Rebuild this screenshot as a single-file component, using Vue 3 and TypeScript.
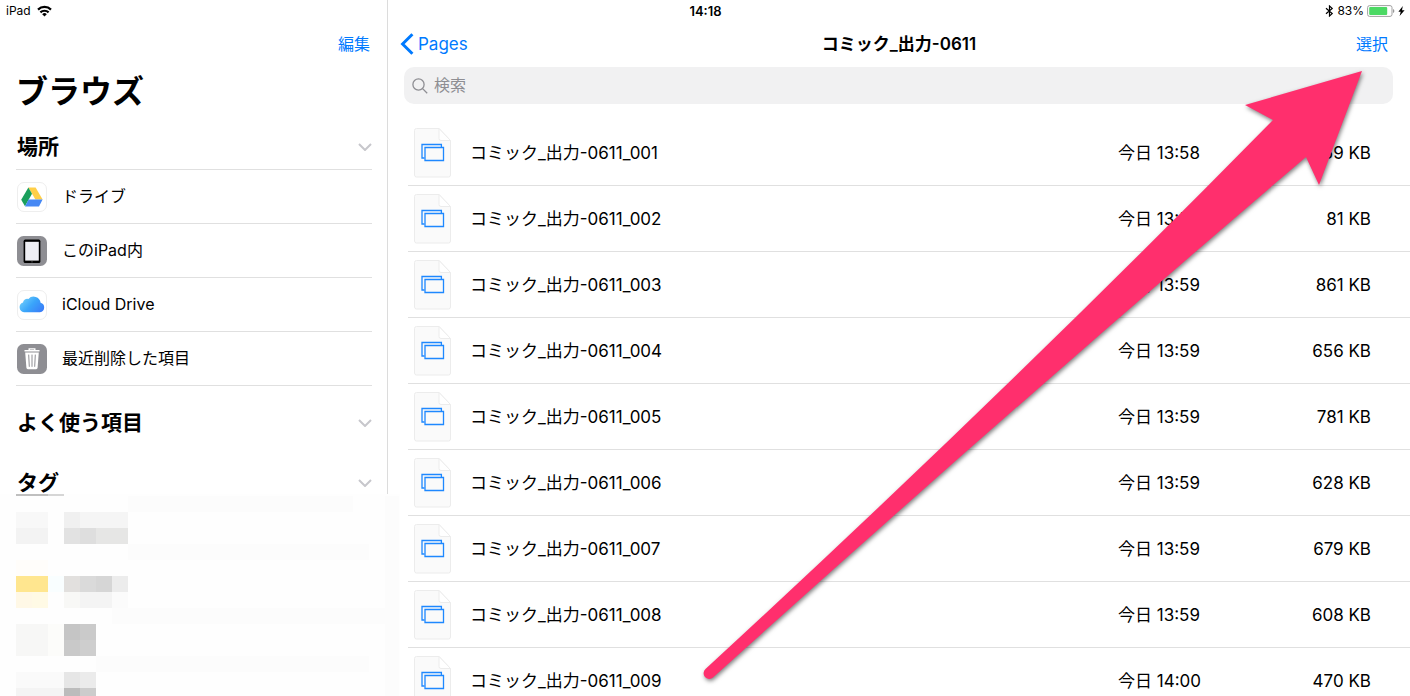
<script setup lang="ts">
interface FileRow {
  name: string
  date: string
  size: string
}

const files: FileRow[] = [
  { name: 'コミック_出力-0611_001', date: '今日 13:58', size: '659 KB' },
  { name: 'コミック_出力-0611_002', date: '今日 13:58', size: '81 KB' },
  { name: 'コミック_出力-0611_003', date: '今日 13:59', size: '861 KB' },
  { name: 'コミック_出力-0611_004', date: '今日 13:59', size: '656 KB' },
  { name: 'コミック_出力-0611_005', date: '今日 13:59', size: '781 KB' },
  { name: 'コミック_出力-0611_006', date: '今日 13:59', size: '628 KB' },
  { name: 'コミック_出力-0611_007', date: '今日 13:59', size: '679 KB' },
  { name: 'コミック_出力-0611_008', date: '今日 13:59', size: '608 KB' },
  { name: 'コミック_出力-0611_009', date: '今日 14:00', size: '470 KB' },
]

const places = [
  { id: 'drive', label: 'ドライブ' },
  { id: 'ipad', label: 'このiPad内' },
  { id: 'icloud', label: 'iCloud Drive' },
  { id: 'trash', label: '最近削除した項目' },
]

// Redaction blocks over the tag list: x, y, width, height, fill
const blocks: [number, number, number, number, string][] = [
  [0, 0, 400, 202, '#fefefe'],
  [128, 2, 225, 16, '#fcfcfc'],
  [128, 50, 241, 16, '#fcfcfc'],
  [112, 114, 280, 16, '#fcfcfc'],
  [96, 162, 273, 16, '#fcfcfc'],
  [385, 2, 14, 200, '#fcfcfc'],
  [16, 0, 32, 2, '#bfbfbf'],
  [48, 0, 16, 2, '#d6d6d6'],
  [16, 18, 32, 16, '#f8f8f8'],
  [16, 34, 32, 16, '#f3f3f3'],
  [64, 18, 16, 16, '#f0f0f0'],
  [80, 18, 48, 16, '#f5f5f5'],
  [64, 34, 16, 16, '#e2e2e2'],
  [80, 34, 16, 16, '#dedede'],
  [96, 34, 32, 16, '#e6e6e5'],
  [16, 66, 32, 16, '#fffdfa'],
  [16, 82, 32, 16, '#ffe68f'],
  [48, 82, 16, 16, '#f9feff'],
  [64, 82, 16, 16, '#e2e0de'],
  [80, 82, 16, 16, '#dadada'],
  [96, 82, 16, 16, '#d6d6d6'],
  [112, 82, 16, 16, '#ececec'],
  [16, 98, 16, 16, '#fff8e6'],
  [32, 98, 16, 16, '#fffae5'],
  [64, 98, 16, 16, '#f8f8f6'],
  [80, 98, 32, 16, '#f4f4f4'],
  [112, 98, 16, 16, '#fbfbfb'],
  [16, 130, 32, 32, '#f7f7f6'],
  [48, 130, 16, 32, '#fcfcfa'],
  [64, 130, 16, 16, '#c5c5c5'],
  [80, 130, 16, 16, '#cacaca'],
  [64, 146, 16, 16, '#c9c9c9'],
  [80, 146, 16, 16, '#cecece'],
  [16, 178, 48, 16, '#fafafa'],
  [64, 178, 16, 16, '#e6e6e6'],
  [80, 178, 16, 16, '#ebebeb'],
  [16, 194, 48, 8, '#f4f4f4'],
  [64, 194, 16, 8, '#bcbcbc'],
  [80, 194, 16, 8, '#cccccc'],
]
</script>

<template>
  <div class="app">
    <header class="status">
      <div class="status-left">
        <span>iPad</span>
        <svg width="15" height="12" viewBox="0 0 15 12" aria-hidden="true">
          <g fill="none" stroke="#000" stroke-width="2.2">
            <path d="M1 4.6a9.3 9.3 0 0 1 13 0" />
            <path d="M3.4 7.4a5.9 5.9 0 0 1 8.2 0" />
          </g>
          <path d="M7.5 11.5 5.2 9.2a3.3 3.3 0 0 1 4.6 0z" />
        </svg>
      </div>
      <div class="clock">14:18</div>
      <div class="status-right">
        <svg width="9" height="12" viewBox="0 0 9 12" aria-hidden="true">
          <path d="M1 3.2 7.2 8.6 4.5 11V1l2.7 2.4L1 8.8" fill="none" stroke="#000" stroke-width="1.2" />
        </svg>
        <span>83%</span>
        <svg width="28" height="12" viewBox="0 0 28 12" aria-hidden="true">
          <rect x=".6" y=".6" width="24.4" height="10.8" rx="2" fill="#fff" stroke="#a0a0a0" />
          <rect x="2.2" y="2" width="18" height="8" rx="1" fill="#4cd964" />
          <path d="M26 4v4q1.4-.5 1.4-2T26 4z" fill="#999" />
        </svg>
        <svg width="7" height="10" viewBox="0 0 7 10" aria-hidden="true">
          <path d="M4.8 0 .4 5.7h2.3L1.6 10l5-5.8H4z" />
        </svg>
      </div>
    </header>

    <aside class="sidebar">
      <div class="edit-bar"><button type="button" class="link">編集</button></div>
      <h1>ブラウズ</h1>
      <section>
        <button type="button" class="section-head places-head">
          <span>場所</span>
          <svg width="14" height="8" viewBox="0 0 14 8" aria-hidden="true"><path d="m1 1 6 6 6-6" /></svg>
        </button>
        <ul>
          <li v-for="place in places" :key="place.id">
            <button type="button" class="place">
              <svg v-if="place.id === 'drive'" width="32" height="32" viewBox="0 0 32 32" aria-hidden="true">
                <rect x="1.5" y="1.5" width="29" height="29" rx="6.5" fill="#fff" stroke="#eee" />
                <path d="M12.4 6.4h7.2l7 12.2h-7.2z" fill="#ffcf48" />
                <path d="m12.4 6.4 3.6 6.3-7 12.6-3.8-6.6z" fill="#1a9f5c" />
                <path d="M12.5 18.6h14.1L23 25.4H9z" fill="#4688f4" />
              </svg>
              <svg v-else-if="place.id === 'ipad'" width="32" height="32" viewBox="0 0 32 32" aria-hidden="true">
                <rect x="1" y="1" width="30" height="30" rx="6.5" fill="#8e8e93" />
                <rect x="7.6" y="4.6" width="16.8" height="23.4" rx="1.6" />
                <path fill="#efeff4" d="M9.2 6.8h13.6v18.8H9.2z" />
                <circle cx="16" cy="26.8" r=".6" fill="#777" />
              </svg>
              <svg v-else-if="place.id === 'icloud'" width="32" height="32" viewBox="0 0 32 32" aria-hidden="true">
                <defs>
                  <linearGradient id="cloud" x1="0" y1=".2" x2="1" y2=".8">
                    <stop offset="0" stop-color="#72d1fb" />
                    <stop offset=".5" stop-color="#3aa5fa" />
                    <stop offset="1" stop-color="#3a7df8" />
                  </linearGradient>
                </defs>
                <rect x="1.5" y="1.5" width="29" height="29" rx="6.5" fill="#fff" stroke="#eee" />
                <path d="M8 23.200a5 5 0 0 1-1-9.700 4.200 4.200 0 0 1 5.400-3.500 7 7 0 0 1 12.200 3.800 4.800 4.800 0 0 1-.6 9.400z" fill="url(#cloud)" />
              </svg>
              <svg v-else width="32" height="32" viewBox="0 0 32 32" aria-hidden="true">
                <rect x="1" y="1" width="30" height="30" rx="6.5" fill="#8e8e93" />
                <path d="M8.5 7.8h15M13.2 7.6V5.9h5.6v1.7" fill="none" stroke="#fff" stroke-width="1.4" />
                <path d="M9.2 9.4h13.6l-1.2 15.4q-.1 1.4-1.5 1.4h-8.2q-1.4 0-1.5-1.4z" fill="#fff" />
                <path d="m12.7 11.6.6 12.2M16 11.6v12.2M19.3 11.6l-.6 12.2" stroke="#8e8e93" fill="none" />
              </svg>
              <span>{{ place.label }}</span>
            </button>
          </li>
        </ul>
      </section>
      <section class="closed">
        <button type="button" class="section-head">
          <span>よく使う項目</span>
          <svg width="14" height="8" viewBox="0 0 14 8" aria-hidden="true"><path d="m1 1 6 6 6-6" /></svg>
        </button>
        <button type="button" class="section-head">
          <span>タグ</span>
          <svg width="14" height="8" viewBox="0 0 14 8" aria-hidden="true"><path d="m1 1 6 6 6-6" /></svg>
        </button>
      </section>
      <svg class="mosaic" width="400" height="202" viewBox="0 0 400 202" shape-rendering="crispEdges" aria-hidden="true">
        <rect v-for="(b, i) in blocks" :key="i" :x="b[0]" :y="b[1]" :width="b[2]" :height="b[3]" :fill="b[4]" />
      </svg>
    </aside>

    <main>
      <nav>
        <button type="button" class="link back">
          <svg width="14" height="22" viewBox="0 0 14 22" aria-hidden="true">
            <path d="M12.4 1.2 2.6 11l9.8 9.8" fill="none" stroke="#007aff" stroke-width="3" />
          </svg>
          <span>Pages</span>
        </button>
        <h2>コミック_出力-0611</h2>
        <button type="button" class="link select">選択</button>
      </nav>
      <label class="search">
        <svg width="16" height="16" viewBox="0 0 16 16" aria-hidden="true">
          <g fill="none" stroke="#8e8e93" stroke-width="1.3">
            <circle cx="6.5" cy="6.5" r="5.6" />
            <path d="m10.6 10.6 4.6 4.6" />
          </g>
        </svg>
        <input type="search" placeholder="検索" aria-label="検索" />
      </label>
      <table aria-label="コミック_出力-0611">
        <tbody>
          <tr v-for="file in files" :key="file.name">
            <td class="thumb">
              <svg width="38" height="50" viewBox="0 0 38 50" aria-hidden="true">
                <path d="M2.5.5H25l11.5 12V47q0 2-2 2h-32q-2 0-2-2V2.5q0-2 2-2z" fill="#fafafa" stroke="#ececec" />
                <path d="M25 .5v10q0 2 2 2h9.500z" fill="#fff" stroke="#ececec" />
                <g fill="none" stroke="#1e88ff" stroke-width="1.3">
                  <path d="M10.5 30H8V16.5h19.4V19" />
                  <path d="M11 19.5h18.5v13H11z" />
                </g>
              </svg>
            </td>
            <td class="name">{{ file.name }}</td>
            <td class="date">{{ file.date }}</td>
            <td class="size">{{ file.size }}</td>
          </tr>
        </tbody>
      </table>
    </main>

    <svg class="arrow" viewBox="0 0 1410 696" aria-hidden="true">
      <path
        d="M1362 71 1245 105l28 15Q1000 398 705.5 669a5.5 5.5 0 0 0 7.5 8.5Q1006 413 1306 157l13 28z"
        fill="#ff2f6d"
      />
    </svg>
  </div>
</template>

<style>
body {
  margin: 0;
  background: #fff;
}
</style>

<style scoped>
.app {
  position: relative;
  display: grid;
  grid-template-columns: 388px 1fr;
  grid-template-rows: 22px 1fr;
  height: 100vh;
  overflow: hidden;
  background: #fff;
  color: #000;
  font-family: Inter, "Noto Sans CJK JP", sans-serif;
  font-size: 16px;
  line-height: 24px;
}
button {
  border: 0;
  margin: 0;
  padding: 0;
  background: none;
  color: inherit;
  font: inherit;
  text-align: left;
}
svg {
  display: block;
  flex: none;
}
.status {
  grid-area: 1 / 1 / 2 / 3;
  display: grid;
  grid-template-columns: 1fr auto 1fr;
  align-items: center;
  padding: 0 5px 0 6px;
  font-size: 12px;
  line-height: 22px;
}
.status-left,
.status-right {
  display: flex;
  align-items: center;
  gap: 6px;
}
.status-right {
  justify-content: flex-end;
  gap: 3px;
}
.clock {
  font-size: 13px;
  font-weight: 600;
}
.sidebar {
  grid-area: 1 / 1 / 3 / 2;
  box-sizing: border-box;
  padding: 22px 15px 0 16px;
  border-right: 1px solid #dcdcdc;
  min-height: 0;
}
.edit-bar {
  display: flex;
  align-items: center;
  justify-content: flex-end;
  height: 44px;
  padding-right: 2px;
}
.link {
  color: #007aff;
}
h1 {
  margin: 0;
  padding-top: 2px;
  font-size: 32px;
  line-height: 48px;
  font-weight: 700;
}
.section-head {
  display: flex;
  align-items: center;
  justify-content: space-between;
  width: 100%;
  height: 60px;
  padding-left: 1px;
  font-size: 21px;
  font-weight: 700;
}
.section-head path {
  fill: none;
  stroke: #c7c7cc;
  stroke-width: 2;
}
.places-head {
  height: 54px;
  padding-top: 8px;
  border-bottom: 1px solid #e0e0e0;
}
ul {
  list-style: none;
  margin: 0;
  padding: 0;
}
li {
  border-bottom: 1px solid #e0e0e0;
}
.place {
  display: flex;
  align-items: center;
  gap: 14px;
  width: 100%;
  height: 53px;
}
.place span {
  padding-bottom: 2px;
}
.closed {
  margin-top: 7px;
}
.mosaic {
  position: relative;
  margin: -19px 0 0 -16px;
}
main {
  grid-area: 2 / 2 / 3 / 3;
  min-width: 0;
  min-height: 0;
}
nav {
  display: grid;
  grid-template-columns: 1fr auto 1fr;
  align-items: center;
  height: 44px;
  padding: 0 12px;
}
.back {
  display: flex;
  align-items: center;
  gap: 4px;
  font-size: 17px;
}
.select {
  justify-self: end;
  padding-right: 10px;
}
h2 {
  margin: 0;
  font-size: 17px;
  font-weight: 600;
}
.search {
  display: flex;
  align-items: center;
  gap: 6px;
  height: 37px;
  margin: 1px 17px 16px 16px;
  padding: 0 8px;
  border-radius: 10px;
  background: #f1f1f2;
}
input {
  flex: 1;
  min-width: 0;
  border: 0;
  padding: 0 0 2px;
  outline: 0;
  background: none;
  font: inherit;
}
input::placeholder {
  color: #8e8e93;
  opacity: 1;
}
table {
  width: calc(100% - 20px);
  margin-left: 20px;
  border-spacing: 0;
  font-size: 17px;
}
td {
  box-sizing: border-box;
  height: 66px;
  padding: 0;
  border-bottom: 1px solid #e0e0e0;
}
.thumb {
  width: 62px;
  padding-left: 6px;
}
.date {
  width: 120px;
}
.size {
  width: 172px;
  padding-right: 39px;
  text-align: right;
}
.arrow {
  position: absolute;
  inset: 0;
  width: 100%;
  height: 100%;
  pointer-events: none;
  filter: drop-shadow(1px 2px 2px rgba(0, 0, 0, 0.5));
}
</style>
